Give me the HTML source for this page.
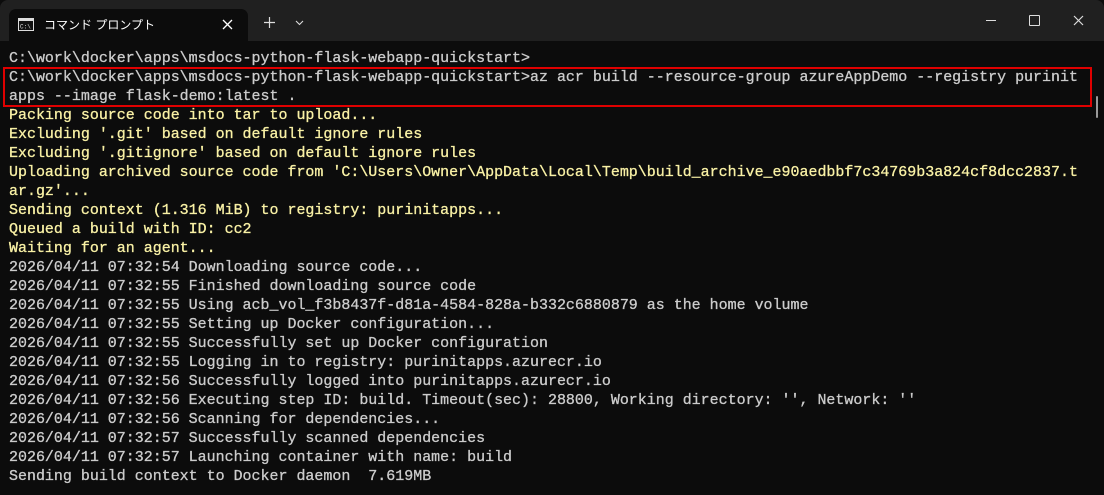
<!DOCTYPE html>
<html><head><meta charset="utf-8"><style>
body{margin:0;width:1104px;height:495px;background:#0c0c0c;overflow:hidden;position:relative;font-family:"Liberation Sans","Noto Sans CJK JP",sans-serif}
.tb{position:absolute;left:0;top:0;width:1104px;height:41px;background:#202020;border-radius:8px 8px 0 0}
.tab{position:absolute;left:9px;top:9px;width:239px;height:32px;background:#0c0c0c;border-radius:7px 7px 0 0}
.term{position:absolute;left:9px;top:50px;font-family:"Liberation Mono",monospace;font-size:14.97px;line-height:19px;color:#cccccc;white-space:pre;-webkit-text-stroke:0.3px currentColor}
.y{color:#f9f1a5}
.red{position:absolute;left:3px;top:67px;width:1085px;height:36px;border:2px solid #e00000}
</style></head><body>
<div class="tb"></div>
<div class="tab">
<svg style="position:absolute;left:9px;top:9px" width="16" height="13"><rect x="0.5" y="0.5" width="15" height="12" fill="#111" stroke="#ddd"/><rect x="1" y="1" width="14" height="2" fill="#ddd"/><text x="2" y="10.5" font-size="6" fill="#ddd" font-family="Liberation Mono">C:\</text></svg>
<div style="position:absolute;left:35px;top:7px;color:#fff;font-size:12px">コマンド プロンプト</div>
<svg style="position:absolute;left:213px;top:10px" width="11" height="11"><path d="M1 1L10 10M10 1L1 10" stroke="#fff" stroke-width="1.3"/></svg>
</div>
<svg style="position:absolute;left:264px;top:17px" width="11" height="11"><path d="M5.5 0V11M0 5.5H11" stroke="#ddd" stroke-width="1.2"/></svg>
<svg style="position:absolute;left:295px;top:20px" width="9" height="6"><path d="M1 1L4.5 4.5L8 1" stroke="#ddd" stroke-width="1.1" fill="none"/></svg>
<div style="position:absolute;left:986px;top:20px;width:10px;border-top:1px solid #ddd"></div>
<div style="position:absolute;left:1029px;top:15px;width:9px;height:9px;border:1px solid #ddd;border-radius:1px"></div>
<svg style="position:absolute;left:1073px;top:15px" width="11" height="11"><path d="M1 1L10 10M10 1L1 10" stroke="#ddd" stroke-width="1.2"/></svg>
<div style="position:absolute;left:1096px;top:96px;width:2px;height:22px;background:#9a9a9a;border-radius:1px"></div>
<div class="term">C:\work\docker\apps\msdocs-python-flask-webapp-quickstart>
C:\work\docker\apps\msdocs-python-flask-webapp-quickstart>az acr build --resource-group azureAppDemo --registry purinit
apps --image flask-demo:latest .
<span class="y">Packing source code into tar to upload...
Excluding '.git' based on default ignore rules
Excluding '.gitignore' based on default ignore rules
Uploading archived source code from 'C:\Users\Owner\AppData\Local\Temp\build_archive_e90aedbbf7c34769b3a824cf8dcc2837.t
ar.gz'...
Sending context (1.316 MiB) to registry: purinitapps...
Queued a build with ID: cc2
Waiting for an agent...</span>
2026/04/11 07:32:54 Downloading source code...
2026/04/11 07:32:55 Finished downloading source code
2026/04/11 07:32:55 Using acb_vol_f3b8437f-d81a-4584-828a-b332c6880879 as the home volume
2026/04/11 07:32:55 Setting up Docker configuration...
2026/04/11 07:32:55 Successfully set up Docker configuration
2026/04/11 07:32:55 Logging in to registry: purinitapps.azurecr.io
2026/04/11 07:32:56 Successfully logged into purinitapps.azurecr.io
2026/04/11 07:32:56 Executing step ID: build. Timeout(sec): 28800, Working directory: '', Network: ''
2026/04/11 07:32:56 Scanning for dependencies...
2026/04/11 07:32:57 Successfully scanned dependencies
2026/04/11 07:32:57 Launching container with name: build
Sending build context to Docker daemon  7.619MB</div>
<div class="red"></div>
</body></html>
